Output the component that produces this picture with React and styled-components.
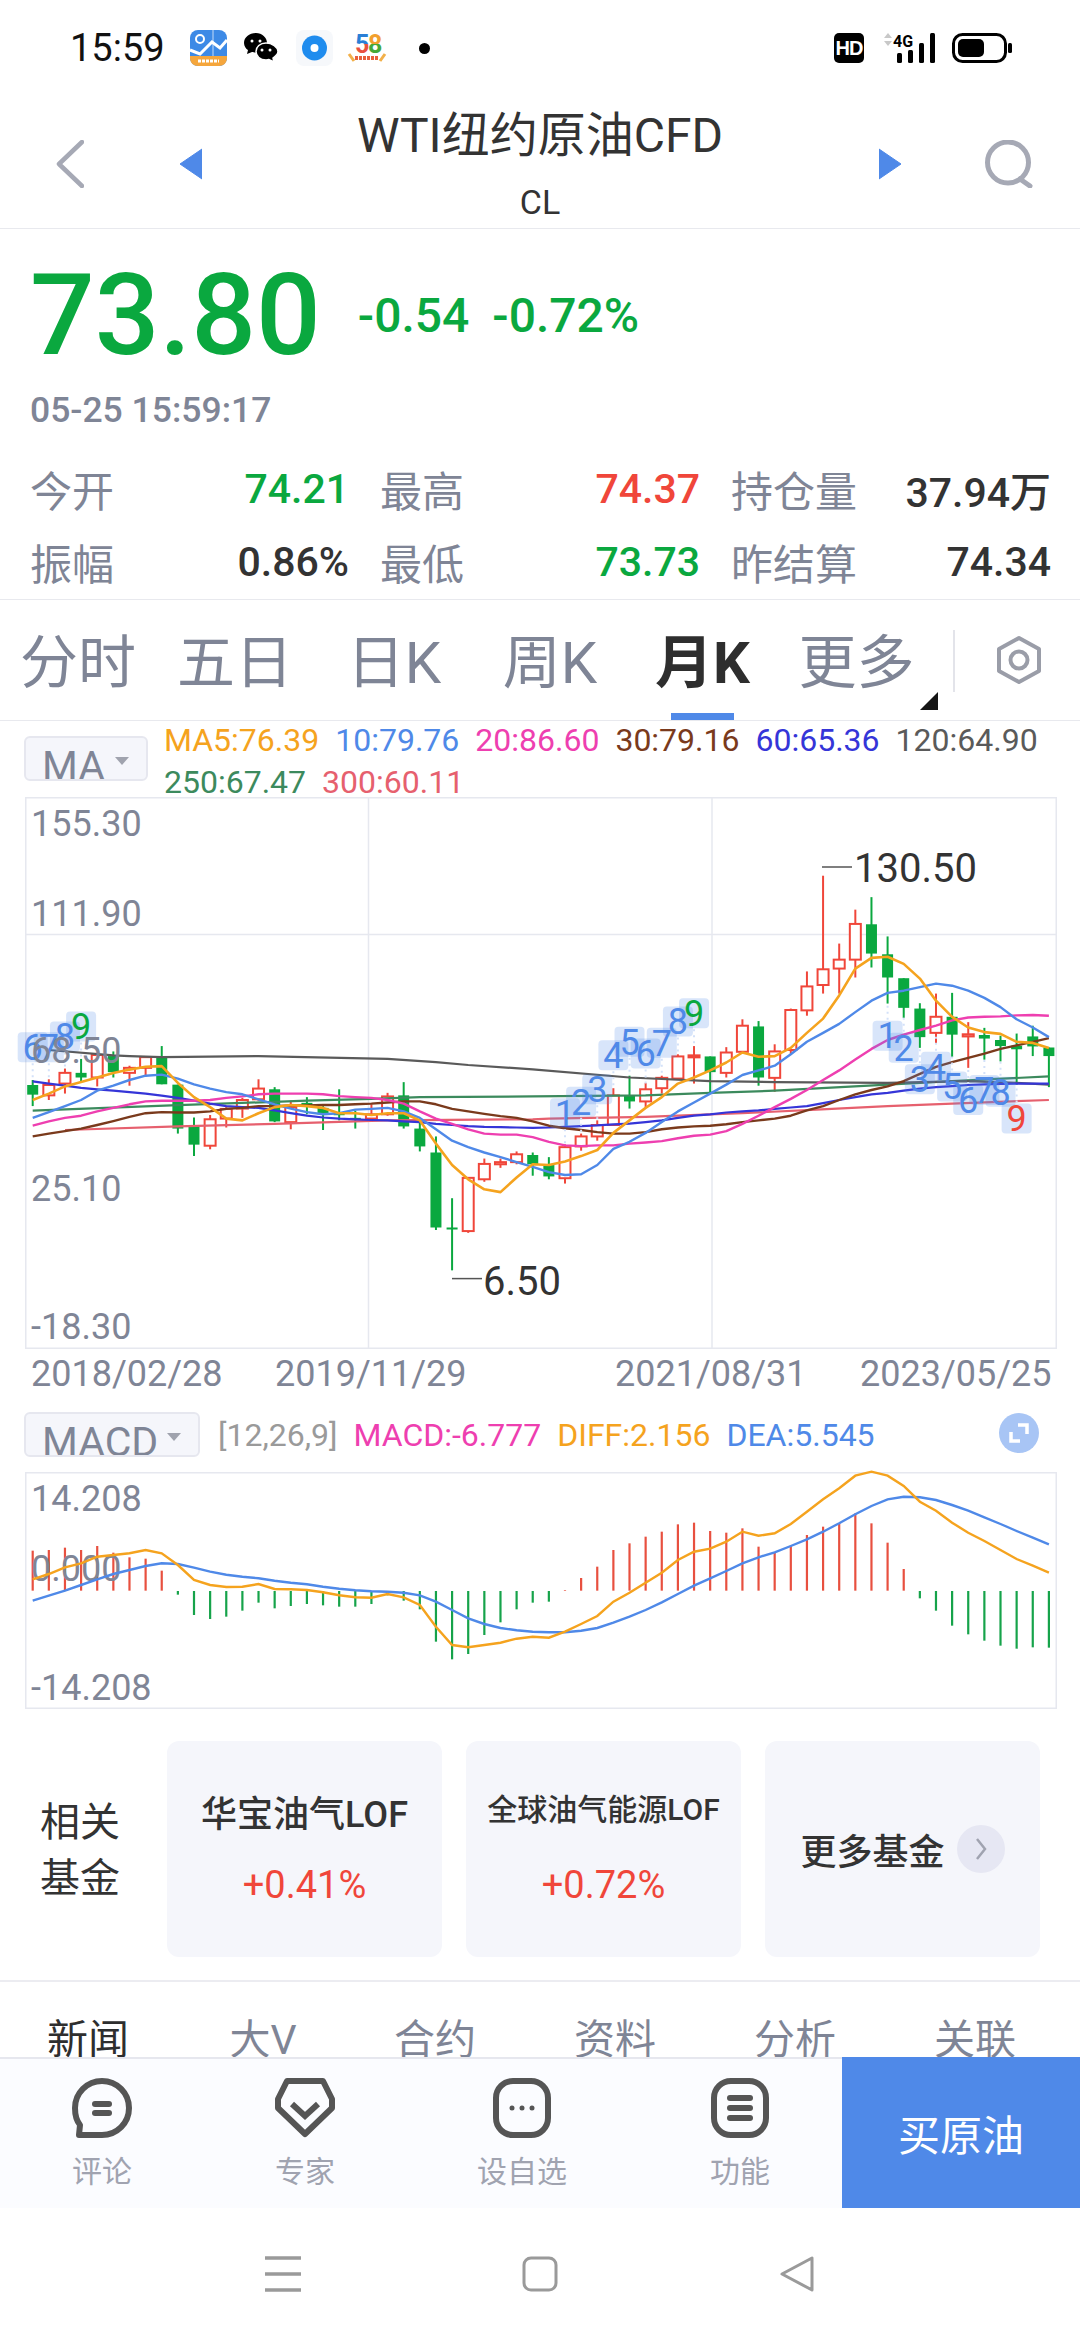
import React from 'react';
import styled, { createGlobalStyle } from 'styled-components';

const GREEN = '#0aa83f', RED = '#f0463a', BLUE = '#4f89e8', GRAY = '#7f8596', DARK = '#333333';
const ORANGE = '#f5a31e', PINK = '#ee3fb0', BROWN = '#7a3a1c', NAVY = '#3535d8', SMOKE = '#5a5a5a', PINE = '#3c8a5d', CORAL = '#e6606e';

const Global = createGlobalStyle`
  html, body { margin: 0; padding: 0; background: #fff; }
  * { box-sizing: border-box; }
`;

const Page = styled.div`
  width: 1080px; height: 2340px; overflow: hidden; background: #fff;
  display: flex; flex-direction: column;
  font-family: Roboto, "Noto Sans CJK SC", sans-serif; color: ${DARK};
`;

/* status bar */
const StatusBar = styled.div`
  height: 96px; flex: none; display: flex; align-items: center; padding: 0 68px 0 70px;
`;
const Clock = styled.span`font-size: 38px; color: #111; line-height: 40px;`;
const NotifyIcons = styled.div`display: flex; align-items: center; margin-left: 25px;`;
const NotifyIcon = styled.svg`display: block; overflow: visible; margin-right: ${p => p.$gap || 0}px;`;
const StatusRight = styled.div`margin-left: auto; display: flex; align-items: center; gap: 16px;`;
const HdBadge = styled.span`
  width: 30px; height: 30px; background: #000; color: #fff; border-radius: 5px;
  font: 700 20px/30px "Liberation Sans", sans-serif; text-align: center; letter-spacing: -1px;
`;

/* header */
const Header = styled.header`
  height: 133px; flex: none; border-bottom: 1.5px solid #e8e9ee;
  display: grid; grid-template-columns: 1fr auto 1fr; align-items: center;
`;
const HeaderSide = styled.div`
  display: flex; align-items: center;
  justify-content: ${p => (p.$end ? 'flex-end' : 'flex-start')};
  padding: ${p => (p.$end ? '3px 46px 0 0' : '3px 0 0 56px')};
  gap: ${p => (p.$end ? 83 : 96)}px;
`;
const TitleStack = styled.div`
  align-self: start; padding-top: 10px; display: flex; flex-direction: column; align-items: center;
`;
const Title = styled.div`font-size: 48px; line-height: 60px;`;
const Symbol = styled.div`font-size: 34px; line-height: 40px; margin-top: 16px;`;

/* quote */
const Quote = styled.section`
  height: 371px; flex: none; border-bottom: 1.5px solid #e8e9ee; padding: 28px 0 0 30px;
`;
const PriceRow = styled.div`display: flex; align-items: center; height: 116px;`;
const Price = styled.span`font-size: 114px; line-height: 116px; font-weight: 500; color: ${GREEN};`;
const Change = styled.span`
  font-size: 48px; font-weight: 500; color: ${GREEN}; margin-left: ${p => p.$gap}px;
`;
const QuoteTime = styled.div`font-size: 35.5px; font-weight: 500; line-height: 40px; color: ${GRAY}; margin-top: 17px;`;
const Stats = styled.div`
  display: grid; grid-template-columns: 317px 318px 318px; column-gap: 33px;
  grid-auto-rows: 73px; margin-top: 22px;
`;
const Stat = styled.div`display: flex; justify-content: space-between; align-items: center;`;
const StatLabel = styled.span`font-size: 42px; color: ${GRAY};`;
const StatValue = styled.span`font-size: 41px; font-weight: 500; color: ${p => p.$color}; margin-right: -2px;`;

/* period tabs */
const PeriodBar = styled.nav`
  height: 121px; flex: none; border-bottom: 1.5px solid #e8e9ee; display: flex; align-items: stretch;
`;
const Period = styled.div`
  position: relative; width: ${p => p.$w}px; display: flex; align-items: center; justify-content: center;
  padding-bottom: 4px; font-size: 58px; color: ${p => (p.$active ? '#2e2e2e' : GRAY)};
  font-weight: ${p => (p.$active ? 700 : 400)};
`;
const ActiveMark = styled.i`
  position: absolute; left: 45px; bottom: 0; width: 63px; height: 7px; background: ${BLUE};
`;
const CornerMark = styled.i`
  position: absolute; right: -4px; bottom: 10px; width: 0; height: 0;
  border-left: 18px solid transparent; border-bottom: 18px solid #151515;
`;
const PeriodDivider = styled.i`width: 2px; height: 62px; background: #e3e4ea; margin: 30px 0 0 19px;`;
const SettingIcon = styled.svg`margin: 35px 0 0 41px;`;

/* indicator rows */
const IndicatorRow = styled.div`
  height: ${p => p.$h}px; flex: none; display: flex; align-items: flex-start;
  padding: 15px ${p => p.$right}px 0 24px;
`;
const Picker = styled.div`
  position: relative; height: 45px; width: ${p => p.$w}px; flex: none; overflow: hidden;
  background: #f5f6fb; border: 2px solid #e6e7ef; border-radius: 6px;
  padding-left: 16px; font-size: 41px; line-height: 57px; color: ${GRAY};
`;
const PickerCaret = styled.i`
  position: absolute; right: ${p => p.$r}px; top: 19px; width: 0; height: 0;
  border: 7px solid transparent; border-top: 8px solid #a0a3ae; border-bottom: 0;
`;
const Legend = styled.div`
  flex: 1; display: flex; flex-wrap: wrap; column-gap: 16px; margin-left: ${p => p.$left}px; margin-top: ${p => p.$top}px;
`;
const LegendItem = styled.span`font-size: 32px; line-height: 42px; color: ${p => p.$color}; white-space: nowrap;`;
const ExpandButton = styled.div`
  width: 40px; height: 40px; flex: none; margin-top: 1px; border-radius: 50%; background: #a8c5f5;
  display: flex; align-items: center; justify-content: center;
`;

/* charts */
const ChartFrame = styled.div`
  margin-left: 25px; width: 1032px; height: ${p => p.$h}px; flex: none;
  box-shadow: inset 0 0 0 1.5px #e6e8ef;
`;
const ChartSvg = styled.svg`display: block; overflow: visible;`;
const AxisText = styled.text`font-size: 36px; fill: ${GRAY};`;
const ExtremeText = styled.text`font-size: 40px; fill: ${DARK};`;
const CountText = styled.text`font-size: 36px; text-anchor: middle;`;

const DateRow = styled.div`
  height: 48px; flex: none; display: grid; grid-template-columns: 244px 340px 245px auto; padding-left: 31px;
  font-size: 36px; line-height: 50px; color: ${GRAY};
`;

/* funds */
const Funds = styled.section`
  height: 273px; flex: none; border-bottom: 2px solid #ececf1; padding: 32px 0 0 40px;
  display: grid; grid-template-columns: 103px 275px 275px 275px; column-gap: 24px; align-items: start;
`;
const FundsLabel = styled.div`
  height: 216px; padding-top: 4px; display: flex; align-items: center; font-size: 40px; line-height: 56px; color: ${DARK}; width: 84px;
`;
const FundCard = styled.div`
  height: 216px; border-radius: 12px; background: #f5f6fb; padding-top: 54px;
  display: flex; flex-direction: column; align-items: center;
`;
const FundName = styled.div`
  font-size: ${p => (p.$small ? 30 : 36)}px; line-height: ${p => (p.$small ? 30 : 40)}px; font-weight: 500; color: ${DARK};
  white-space: nowrap;
`;
const FundChange = styled.div`font-size: 38px; line-height: 40px; color: ${RED}; margin-top: ${p => (p.$small ? 40 : 30)}px;`;
const MoreCard = styled.div`
  height: 216px; border-radius: 12px; background: #f5f6fb;
  display: flex; align-items: center; justify-content: center; gap: 12px;
  font-size: 36px; font-weight: 500;
`;
const MoreCircle = styled.div`
  width: 48px; height: 48px; border-radius: 50%; background: #e6e7f3; display: flex; align-items: center; justify-content: center;
`;

/* content tabs */
const ContentTabs = styled.div`
  height: 75px; flex: none; overflow: hidden; padding-top: 30px; margin-left: -2px;
  display: grid; grid-template-columns: 180px 170px 174px 186px 174px 186px;
`;
const ContentTab = styled.div`
  font-size: 41px; line-height: 56px; text-align: center; color: ${p => (p.$active ? '#2e2e2e' : GRAY)};
`;

/* bottom bar */
const Toolbar = styled.div`
  height: 151px; flex: none; background: #fbfcff; border-top: 2px solid #e6e7ee;
  display: grid; grid-template-columns: 204px 202px 232px 204px 238px;
`;
const ToolItem = styled.div`
  display: flex; flex-direction: column; align-items: center; padding-top: 19px;
`;
const ToolLabel = styled.span`font-size: 30px; line-height: 40px; color: #a0a3b0; margin-top: 14px;`;
const BuyButton = styled.div`
  background: ${BLUE}; color: #fff; font-size: 42px; display: flex; align-items: center; justify-content: center; margin-top: -2px;
`;

/* system nav */
const SystemNav = styled.div`
  flex: 1; display: flex; align-items: center; justify-content: center; gap: 221px; padding-bottom: 1px;
`;

/* ---------- chart data ---------- */
const cx = i => 32.7 + 16.13 * i;
const ky = z => 790 + z / 2.8;
const my = z => 1400 + z / 3;

const candles = [
  [812,826,853,885,'g'],[810,826,855,868,'r'],[780,792,822,850,'r'],[753,792,805,818,'g'],[735,742,805,830,'r'],
  [732,745,790,805,'g'],[772,778,792,828,'r'],[745,748,778,802,'r'],[717,750,824,824,'g'],[825,825,948,962,'g'],
  [917,938,993,1025,'g'],[910,922,996,1006,'r'],[888,893,920,945,'r'],[862,868,892,918,'r'],[810,836,866,870,'r'],
  [832,838,928,930,'g'],[870,888,930,950,'r'],[860,876,882,908,'g'],[885,890,908,952,'g'],[838,905,908,925,'g'],
  [898,918,920,948,'g'],[880,908,920,925,'r'],[848,858,908,912,'r'],[818,855,942,948,'g'],[928,948,998,1012,'g'],
  [970,1015,1225,1232,'g'],[1143,1225,1230,1345,'g'],[1086,1086,1235,1240,'r'],[1032,1047,1090,1097,'r'],[1032,1042,1048,1058,'r'],
  [1012,1020,1042,1048,'r'],[1015,1022,1048,1080,'g'],[1028,1050,1082,1090,'g'],[992,1000,1087,1102,'r'],[962,970,998,1010,'r'],
  [925,938,970,982,'r'],[835,855,938,938,'r'],[800,855,872,892,'g'],[820,838,872,888,'r'],[800,806,835,850,'r'],
  [740,746,808,810,'r'],[717,743,748,822,'r'],[746,746,790,850,'g'],[720,735,792,805,'r'],[642,660,733,738,'r'],
  [647,662,805,828,'g'],[712,732,806,845,'r'],[612,616,728,740,'r'],[508,550,617,632,'r'],[240,502,546,570,'r'],
  [430,475,500,570,'r'],[335,375,475,525,'r'],[300,376,458,497,'g'],[410,460,525,598,'g'],[527,527,610,638,'g'],
  [597,612,692,722,'g'],[570,635,680,710,'r'],[568,635,685,748,'g'],[650,684,690,778,'r'],[666,686,696,755,'g'],
  [688,700,717,760,'g'],[682,716,726,825,'g'],[660,690,718,745,'g'],[721,721,745,832,'g'],
];

const seq = arr => arr.map((y, i) => [i, y]);
const kLines = [
  { c: CORAL, w: 2.2, p: [[2,952],[9,942],[15,935],[22,925],[31,922],[32,920],[38,915],[44,905],[48.6,895],[53,885],[57,878],[63,868]] },
  { c: PINE, w: 2.2, p: [[0,898],[8.6,883],[17,870],[21,865],[24,860],[31,858],[38,855],[42,848],[46,842],[53,825],[57,815],[63,802]] },
  { c: SMOKE, w: 2.2, p: [[1,728],[5,743],[6,745],[8,748],[14,745],[22,753],[25,762],[27,770],[31,782],[37,805],[42,815],[46,818],[53,820],[58,815],[61,820],[63,825]] },
  { c: NAVY, w: 2.2, p: seq([816,822,828,834,838,842,846,850,856,862,870,878,885,888,890,897,905,912,917,920,922,924,925,928,930,935,938,941,943,944,945,946,945,943,941,939,936,934,930,925,918,912,908,903,900,897,893,889,885,877,868,860,852,848,842,836,832,829,826,824,823,822,822,822]) },
  { c: BROWN, w: 2.4, p: seq([970,962,955,948,938,927,915,905,902,903,903,900,893,890,885,885,883,883,882,882,880,878,875,872,872,880,893,900,907,913,918,928,940,947,952,958,962,962,958,950,945,942,940,936,930,925,920,912,897,885,868,852,840,830,815,795,775,762,750,738,725,715,705,695]) },
  { c: PINK, w: 2.4, p: seq([940,928,918,912,900,890,880,872,870,870,870,868,862,858,852,850,850,850,852,857,860,862,868,878,900,920,935,950,962,965,965,972,985,995,997,995,995,990,987,983,975,968,965,955,935,912,888,865,840,812,785,755,725,700,685,672,660,645,637,635,634,631,630,632]) },
  { c: BLUE, w: 2.4, p: seq([918,902,885,868,842,828,812,800,797,808,824,836,846,852,866,880,892,902,908,905,895,893,890,900,918,950,982,1000,1015,1028,1042,1055,1070,1078,1076,1050,1005,985,960,930,900,875,850,825,798,785,772,740,705,680,655,622,590,568,562,552,542,548,562,582,608,642,665,692]) },
  { c: ORANGE, w: 2.6, p: seq([868,850,830,818,805,792,783,775,773,820,860,888,920,925,905,888,882,885,890,905,905,910,905,905,925,990,1050,1090,1118,1126,1085,1048,1050,1040,1025,1008,960,925,890,860,822,805,785,763,735,747,745,722,680,640,575,500,470,467,487,528,590,635,665,678,683,705,708,722]) },
];

const counts = [
  [0,720,'6',BLUE,1],[1,720,'7',BLUE,1],[2,690,'8',BLUE,1],[3,662,'9',GREEN,1],
  [33,905,'1',BLUE,1],[34,873,'2',BLUE,1],[35,838,'3',BLUE,1],[36,743,'4',BLUE,1],[37,705,'5',BLUE,1],[38,738,'6',BLUE,1],[39,708,'7',BLUE,1],[40,648,'8',BLUE,1],[41,625,'9',GREEN,1],
  [53,688,'1',BLUE,-1],[54,722,'2',BLUE,-1],[55,810,'3',BLUE,-1],[56,775,'4',BLUE,-1],[57,830,'5',BLUE,-1],[58,868,'6',BLUE,-1],[59,840,'7',BLUE,-1],[60,845,'8',BLUE,-1],[61,920,'9',RED,-1],
];

const macdBars = [452,450,443,450,438,458,472,476,512,584,645,657,650,632,608,625,618,612,616,620,620,612,586,602,628,725,778,762,705,667,628,608,605,570,534,500,450,430,410,395,373,368,393,398,385,440,458,437,405,380,370,340,370,428,507,595,632,677,703,722,737,746,742,743];
const diff = [538,522,502,490,470,465,460,450,460,495,540,555,561,560,552,567,568,570,577,586,592,593,582,592,615,680,735,742,735,728,716,710,713,695,672,648,605,578,548,518,480,455,446,425,395,407,400,372,335,298,265,227,215,227,258,305,332,368,398,423,450,477,497,518];
const dea = [602,587,572,555,538,522,510,498,490,492,503,515,524,530,535,542,548,553,560,566,571,574,575,578,586,605,630,655,672,684,691,695,697,697,692,684,668,650,630,607,582,557,535,513,490,472,457,438,418,395,370,343,318,298,290,292,300,315,332,352,372,393,413,433];

const pts = (p, f) => p.map(([i, z]) => `${cx(i).toFixed(1)},${f(z).toFixed(1)}`).join(' ');
const mid = (y, s) => y + s * 0.355;

function CandleChart() {
  return (
    <ChartFrame $h={552}>
      <ChartSvg width="1032" height="552" viewBox="25 797 1032 552">
        <g stroke="#e6e8ef" strokeWidth="1.5">
          <line x1="25" x2="1056" y1="934.6" y2="934.6" />
          <line x1="368.5" x2="368.5" y1="797" y2="1349" />
          <line x1="712" x2="712" y1="797" y2="1349" />
        </g>
        {candles.map(([wt, bt, bb, wb, k], i) => {
          const c = k === 'g' ? GREEN : RED;
          const x = cx(i);
          const h = Math.max(ky(bb) - ky(bt), 2);
          return (
            <g key={i}>
              <line x1={x} x2={x} y1={ky(wt)} y2={ky(wb)} stroke={c} strokeWidth="2" />
              {k === 'g'
                ? <rect x={x - 5.5} y={ky(bt)} width="11" height={h} fill={c} />
                : <rect x={x - 5.5} y={ky(bt)} width="11" height={h} fill="#fff" stroke={c} strokeWidth="2" />}
            </g>
          );
        })}
        {kLines.map((l, i) => (
          <polyline key={i} points={pts(l.p, ky)} fill="none" stroke={l.c} strokeWidth={l.w} strokeLinejoin="round" />
        ))}
        {counts.map(([i, z, t, c, dir], n) => {
          const x = cx(i), y = ky(z);
          return (
            <g key={n}>
              <line x1={x} x2={x} y1={y + dir * 16} y2={y + dir * 34} stroke="#d3e1f9" strokeWidth="2" strokeDasharray="2 4" />
              <rect x={x - 15} y={y - 15} width="30" height="30" rx="4" fill={BLUE} opacity="0.22" />
              <CountText x={x} y={mid(y, 36)} fill={c}>{t}</CountText>
            </g>
          );
        })}
        <AxisText x="31" y={mid(823, 36)}>155.30</AxisText>
        <AxisText x="31" y={mid(913, 36)}>111.90</AxisText>
        <AxisText x="31" y={mid(1050, 36)}>68.50</AxisText>
        <AxisText x="31" y={mid(1188, 36)}>25.10</AxisText>
        <AxisText x="31" y={mid(1326, 36)}>-18.30</AxisText>
        <line x1="822" x2="852" y1="867" y2="867" stroke="#555" strokeWidth="1.5" />
        <ExtremeText x="854" y={mid(868, 40)}>130.50</ExtremeText>
        <line x1="452" x2="482" y1="1278.6" y2="1278.6" stroke="#555" strokeWidth="1.5" />
        <ExtremeText x="483" y={mid(1281, 40)}>6.50</ExtremeText>
      </ChartSvg>
    </ChartFrame>
  );
}

function MacdChart() {
  return (
    <ChartFrame $h={237}>
      <ChartSvg width="1032" height="237" viewBox="25 1472 1032 237">
        {macdBars.map((z, i) => {
          const down = z > 572;
          return <line key={i} x1={cx(i)} x2={cx(i)} y1={my(down ? 573 : z)} y2={my(down ? z : 572)} stroke={down ? '#16a34a' : '#e8503f'} strokeWidth="2.2" />;
        })}
        <AxisText x="31" y={mid(1498, 36)}>14.208</AxisText>
        <AxisText x="31" y={mid(1568, 36)}>0.000</AxisText>
        <AxisText x="31" y={mid(1687, 36)}>-14.208</AxisText>
        <polyline points={pts(seq(dea), my)} fill="none" stroke={BLUE} strokeWidth="2.4" />
        <polyline points={pts(seq(diff), my)} fill="none" stroke={ORANGE} strokeWidth="2.4" />
      </ChartSvg>
    </ChartFrame>
  );
}

const AppLogo = () => (
  <NotifyIcon $gap={17} width="37" height="36" viewBox="0 0 37 36">
    <rect width="37" height="36" rx="8" fill="#3d8ae6" />
    <path d="M0 26H37V28C37 33 33 36 29 36H8C4 36 0 33 0 28Z" fill="#f5a63c" />
    <path d="M0 20L10 24L22 12L30 18L37 10" fill="none" stroke="#fff" strokeWidth="3" />
    <path d="M23 0V26" stroke="#fff" strokeWidth="1" opacity=".7" />
    <circle cx="10" cy="9" r="4" fill="none" stroke="#fff" strokeWidth="2" />
    <path d="M8 31H29" stroke="#fff" strokeWidth="3" strokeDasharray="3 1" />
  </NotifyIcon>
);
const WeChat = () => (
  <NotifyIcon $gap={18} width="34" height="30" viewBox="0 0 34 30">
    <path d="M12 0C5 0 0 4.500 0 10C0 13 2 16 4 17L3 21L8 19C9 19 10 19.500 12 19.500C18 19.500 23 15 23 10C23 4.500 18 0 12 0Z" fill="#000" />
    <path d="M22 10C16 10 12 14 12 18.500C12 23 16 27 22 27C23 27 24 27 25 26.500L30 29L29 25C32 23 34 21 34 18.500C34 14 28 10 22 10Z" fill="#000" stroke="#fff" strokeWidth="1.500" />
    <g fill="#fff"><circle cx="8" cy="8" r="1.500" /><circle cx="16" cy="8" r="1.500" /><circle cx="18" cy="17" r="1.500" /><circle cx="26" cy="17" r="1.500" /></g>
  </NotifyIcon>
);
const Disc = () => (
  <NotifyIcon $gap={15} width="37" height="36" viewBox="0 0 37 36">
    <rect width="37" height="36" rx="8" fill="#f6f8fb" />
    <circle cx="18.500" cy="18" r="12.500" fill="#1f8cee" />
    <circle cx="18.500" cy="18" r="4" fill="#fff" />
  </NotifyIcon>
);
const Logo58 = () => (
  <NotifyIcon $gap={33} width="38" height="30" viewBox="0 0 38 30">
    <defs>
      <linearGradient id="five" x1="0" y1="0" x2="0" y2="1"><stop offset=".5" stopColor="#2a7fd6" /><stop offset=".5" stopColor="#e8503f" /></linearGradient>
      <linearGradient id="eight" x1="0" y1="0" x2="0" y2="1"><stop offset=".5" stopColor="#f2a02e" /><stop offset=".5" stopColor="#45a838" /></linearGradient>
    </defs>
    <text x="7" y="20" fontFamily="Roboto, sans-serif" fontWeight="700" fontSize="25" fill="url(#five)">5</text>
    <text x="20" y="20" fontFamily="Roboto, sans-serif" fontWeight="700" fontSize="25" fill="url(#eight)">8</text>
    <path d="M7 25H31" stroke="#e8603c" strokeWidth="4" strokeDasharray="3 1" />
    <path d="M1 21L6 28M37 21L32 28" stroke="#f2b04a" strokeWidth="3" />
  </NotifyIcon>
);
const Dot = () => (
  <svg width="11" height="11" viewBox="0 0 11 11"><circle cx="5.500" cy="5.500" r="5.500" fill="#000" /></svg>
);
const Signal = () => (
  <svg width="56" height="32" viewBox="0 0 56 32" style={{ overflow: 'visible' }}>
    <path d="M4 6L8 1L12 6ZM4 9L8 14L12 9Z" fill="#c8c8c8" />
    <text x="13" y="15" fontFamily="Roboto, sans-serif" fontWeight="700" fontSize="16" fill="#000">4G</text>
    <g fill="#000"><rect x="17" y="21" width="5" height="10" rx="1.500" /><rect x="28" y="18" width="5" height="13" rx="1.500" /><rect x="39" y="11" width="5" height="20" rx="1.500" /><rect x="50" y="1" width="5" height="30" rx="1.500" /></g>
  </svg>
);
const Battery = () => (
  <svg width="60" height="30" viewBox="0 0 60 30">
    <rect x="1.500" y="1.500" width="52" height="27" rx="9" fill="none" stroke="#000" strokeWidth="3" />
    <rect x="6" y="6" width="26" height="18" rx="5" fill="#000" />
    <rect x="56" y="10" width="4" height="10" rx="1.500" fill="#000" />
  </svg>
);
const Arrow = ({ left }) => (
  <svg width="22" height="32" viewBox="0 0 22 32">
    <polygon points={left ? '22,1 0,16 22,31' : '0,1 22,16 0,31'} fill={BLUE} stroke={BLUE} strokeLinejoin="round" />
  </svg>
);

const stats = [
  ['今开', '74.21', GREEN], ['最高', '74.37', RED], ['持仓量', '37.94万', DARK],
  ['振幅', '0.86%', DARK], ['最低', '73.73', GREEN], ['昨结算', '74.34', DARK],
];
const periods = [['分时', 156], ['五日', 158], ['日K', 160], ['周K', 152], ['月K', 153], ['更多', 155]];
const maLegend = [
  ['MA5:76.39', ORANGE], ['10:79.76', BLUE], ['20:86.60', PINK], ['30:79.16', BROWN], ['60:65.36', NAVY],
  ['120:64.90', SMOKE], ['250:67.47', PINE], ['300:60.11', CORAL],
];
const macdLegend = [
  ['[12,26,9]', '#9a9a9a'], ['MACD:-6.777', PINK], ['DIFF:2.156', ORANGE], ['DEA:5.545', BLUE],
];
const contentTabs = ['新闻', '大V', '合约', '资料', '分析', '关联'];

const ICON = { fill: 'none', stroke: '#555', strokeWidth: 6 };

export default function App() {
  return (
    <Page>
      <Global />
      <StatusBar>
        <Clock>15:59</Clock>
        <NotifyIcons><AppLogo /><WeChat /><Disc /><Logo58 /><Dot /></NotifyIcons>
        <StatusRight><HdBadge>HD</HdBadge><Signal /><Battery /></StatusRight>
      </StatusBar>

      <Header>
        <HeaderSide>
          <svg width="28" height="48" viewBox="0 0 28 48"><path d="M26 2L3 24L26 46" fill="none" stroke="#a6a9b5" strokeWidth="4.500" strokeLinecap="round" strokeLinejoin="round" /></svg>
          <Arrow left />
        </HeaderSide>
        <TitleStack>
          <Title>WTI纽约原油CFD</Title>
          <Symbol>CL</Symbol>
        </TitleStack>
        <HeaderSide $end>
          <Arrow />
          <svg width="50" height="48" viewBox="0 0 50 48"><circle cx="24" cy="22.500" r="20.500" fill="none" stroke="#a6a9b5" strokeWidth="5" /><path d="M36 39L46 46" fill="none" stroke="#a6a9b5" strokeWidth="5" strokeLinecap="round" /></svg>
        </HeaderSide>
      </Header>

      <Quote>
        <PriceRow>
          <Price>73.80</Price>
          <Change $gap={37}>-0.54</Change>
          <Change $gap={23}>-0.72%</Change>
        </PriceRow>
        <QuoteTime>05-25 15:59:17</QuoteTime>
        <Stats>
          {stats.map(([k, v, c]) => (
            <Stat key={k}><StatLabel>{k}</StatLabel><StatValue $color={c}>{v}</StatValue></Stat>
          ))}
        </Stats>
      </Quote>

      <PeriodBar>
        {periods.map(([p, w], i) => (
          <Period key={p} $w={w} $active={i === 4}>
            {p}
            {i === 4 && <ActiveMark />}
            {i === 5 && <CornerMark />}
          </Period>
        ))}
        <PeriodDivider />
        <SettingIcon width="46" height="50" viewBox="0 0 46 50">
          <path d="M23 3L43 14V36L23 47L3 36V14Z" fill="none" stroke="#9a9da8" strokeWidth="4" strokeLinejoin="round" />
          <circle cx="23" cy="25" r="8.500" fill="none" stroke="#9a9da8" strokeWidth="4" />
        </SettingIcon>
      </PeriodBar>

      <IndicatorRow $h={76} $right={20}>
        <Picker $w={124}>MA<PickerCaret $r={17} /></Picker>
        <Legend $top={-17} $left={16}>
          {maLegend.map(([t, c]) => <LegendItem key={t} $color={c}>{t}</LegendItem>)}
        </Legend>
      </IndicatorRow>
      <CandleChart />
      <DateRow><span>2018/02/28</span><span>2019/11/29</span><span>2021/08/31</span><span>2023/05/25</span></DateRow>
      <IndicatorRow $h={75} $right={41}>
        <Picker $w={176}>MACD<PickerCaret $r={17} /></Picker>
        <Legend $top={2} $left={18}>
          {macdLegend.map(([t, c]) => <LegendItem key={t} $color={c}>{t}</LegendItem>)}
        </Legend>
        <ExpandButton>
          <svg width="24" height="24" viewBox="0 0 24 24"><path d="M11 4H20V13M13 20H4V11" fill="none" stroke="#fff" strokeWidth="3.500" /></svg>
        </ExpandButton>
      </IndicatorRow>
      <MacdChart />

      <Funds>
        <FundsLabel>相关基金</FundsLabel>
        <FundCard><FundName>华宝油气LOF</FundName><FundChange>+0.41%</FundChange></FundCard>
        <FundCard><FundName $small>全球油气能源LOF</FundName><FundChange $small>+0.72%</FundChange></FundCard>
        <MoreCard>
          更多基金
          <MoreCircle>
            <svg width="14" height="24" viewBox="0 0 14 24"><path d="M3 2L11 12L3 22" fill="none" stroke="#a0a3b0" strokeWidth="2.500" /></svg>
          </MoreCircle>
        </MoreCard>
      </Funds>

      <ContentTabs>
        {contentTabs.map((t, i) => <ContentTab key={t} $active={i === 0}>{t}</ContentTab>)}
      </ContentTabs>

      <Toolbar>
        <ToolItem>
          <svg width="60" height="60" viewBox="0 0 60 60"><path d="M30 3C45 3 57 15 57 30C57 45 45 57 30 57L7 57L8 47C4 42 3 36 3 30C3 15 15 3 30 3Z" {...ICON} strokeLinejoin="round" /><rect x="20" y="23" width="20" height="6" rx="3" fill="#555" /><rect x="20" y="32" width="20" height="6" rx="3" fill="#555" /></svg>
          <ToolLabel>评论</ToolLabel>
        </ToolItem>
        <ToolItem>
          <svg width="60" height="60" viewBox="0 0 60 60"><path d="M12 3H48L57 21V30L30 56L3 30V21Z" {...ICON} strokeLinejoin="round" /><path d="M17 26L30 38L43 26" {...ICON} /></svg>
          <ToolLabel>专家</ToolLabel>
        </ToolItem>
        <ToolItem>
          <svg width="60" height="60" viewBox="0 0 60 60"><rect x="4" y="3" width="52" height="54" rx="17" {...ICON} /><g fill="#555"><circle cx="20" cy="30" r="2.500" /><circle cx="30" cy="30" r="2.500" /><circle cx="40" cy="30" r="2.500" /></g></svg>
          <ToolLabel>设自选</ToolLabel>
        </ToolItem>
        <ToolItem>
          <svg width="60" height="60" viewBox="0 0 60 60"><rect x="4" y="3" width="52" height="54" rx="17" {...ICON} /><g fill="#555"><rect x="17" y="17" width="26" height="6" rx="3" /><rect x="17" y="27" width="26" height="6" rx="3" /><rect x="17" y="37" width="26" height="6" rx="3" /></g></svg>
          <ToolLabel>功能</ToolLabel>
        </ToolItem>
        <BuyButton>买原油</BuyButton>
      </Toolbar>

      <SystemNav>
        <svg width="36" height="36" viewBox="0 0 36 36"><path d="M0 2H36M0 18H36M0 34H36" stroke="#9a9a9a" strokeWidth="3.500" /></svg>
        <svg width="36" height="36" viewBox="0 0 36 36"><rect x="2" y="2" width="32" height="32" rx="7" fill="none" stroke="#9a9a9a" strokeWidth="3" /></svg>
        <svg width="36" height="36" viewBox="0 0 36 36"><path d="M33 2V34L3 18Z" fill="none" stroke="#9a9a9a" strokeWidth="3" strokeLinejoin="round" /></svg>
      </SystemNav>
    </Page>
  );
}
